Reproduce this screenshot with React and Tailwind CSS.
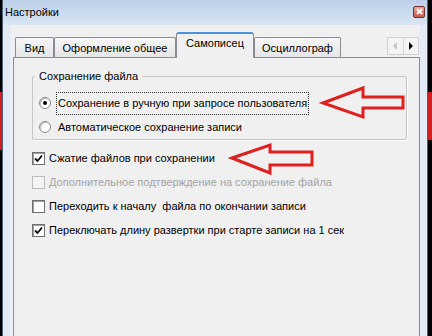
import React from "react";

const font = { fontFamily: '"Liberation Sans", Arial, sans-serif' };

const Check = ({ checked, disabled }) => (
  <span
    className={`w-[13px] h-[13px] shrink-0 flex items-center justify-center border ${
      disabled
        ? "border-[#bcbcbc] bg-[#f4f4f4]"
        : "border-[#707070] bg-white shadow-[inset_1px_1px_0_#a0a0a0]"
    }`}
  >
    {checked && (
      <svg width="9" height="9" viewBox="0 0 9 9">
        <path d="M1 4.5 L3.5 7 L8 1.5" fill="none" stroke="#000" strokeWidth="1.8" />
      </svg>
    )}
  </span>
);

const Radio = ({ checked }) => (
  <span className="w-[12px] h-[12px] shrink-0 rounded-full border border-[#8a8a8a] bg-white shadow-[inset_1px_1px_0_#bdbdbd] flex items-center justify-center">
    {checked && <span className="w-[4px] h-[4px] rounded-full bg-black" />}
  </span>
);

const CheckRow = ({ label, checked, disabled }) => (
  <div className="h-[24px] flex items-center gap-[4px]">
    <Check checked={checked} disabled={disabled} />
    <span className={`whitespace-pre ${disabled ? "text-[#a3a3a3]" : "text-black"}`}>{label}</span>
  </div>
);

const Tab = ({ label, w, active }) =>
  active ? (
    <div
      className={`${w} h-[26px] -mb-px relative z-10 bg-[#f0f0f0] border-x border-[#898c95] border-t-2 border-t-[#4a94dc] rounded-t-[3px] flex items-start justify-center pt-[3px]`}
    >
      {label}
    </div>
  ) : (
    <div
      className={`${w} h-[20px] border-x border-t border-[#898c95] rounded-t-[2px] bg-gradient-to-b from-[#f6f6f6] to-[#e6e6e6] flex items-center justify-center pt-px`}
    >
      {label}
    </div>
  );

export default function App() {
  return (
    <div className="relative w-[432px] h-[336px] bg-black flex overflow-hidden text-[11px] leading-[13px] text-black" style={font}>
      {/* background strip left */}
      <div className="w-[2px] shrink-0 flex flex-col">
        <div className="h-[92px]" />
        <div className="h-[58px] bg-[#d21d1d]" />
      </div>

      {/* window */}
      <div className="w-[426px] shrink-0 flex flex-col border-x border-[#4b5f75]">
        {/* title bar */}
        <div className="h-[25px] shrink-0 bg-gradient-to-b from-[#bcd0e8] to-[#d9e6f4] flex items-center justify-between pl-[2px] pr-[2px]">
          <span className="text-[11px] pb-[1px]">Настройки</span>
          <span className="w-[12px] h-[12px] rounded-[2px] border border-[#6d3232] bg-gradient-to-b from-[#e6a99e] to-[#c45a4c] flex items-center justify-center mb-[2px]">
            <svg width="7" height="7" viewBox="0 0 7 7">
              <path d="M1 1 L6 6 M6 1 L1 6" stroke="#fff" strokeWidth="1.8" />
            </svg>
          </span>
        </div>

        {/* client */}
        <div className="flex-1 flex border-l-[8px] border-r-[7px] border-[#e2ebf6] bg-[#f0f0f0]">
          <div className="flex-1 flex flex-col pl-[2px]">
            {/* tab strip */}
            <div className="h-[32px] shrink-0 flex items-end pl-[2px] relative">
              <Tab label="Вид" w="w-[39px]" />
              <Tab label="Оформление общее" w="w-[122px]" />
              <Tab label="Самописец" w="w-[78px]" active />
              <Tab label="Осциллограф" w="w-[87px]" />
              <div className="ml-auto mr-[1px] mb-[2px] h-[18px] w-[32px] flex border border-[#cfcfcf] bg-[#f4f4f4]">
                <div className="flex-1 flex items-center justify-center border-r border-[#d8d8d8]">
                  <span className="w-0 h-0 border-y-[4px] border-y-transparent border-r-[4px] border-r-[#c4c4c4]" />
                </div>
                <div className="flex-1 flex items-center justify-center">
                  <span className="w-0 h-0 border-y-[4px] border-y-transparent border-l-[4px] border-l-black" />
                </div>
              </div>
            </div>

            {/* tab panel */}
            <div className="flex-1 border border-b-0 border-[#898c95] bg-[#f0f0f0] pl-[18px] pr-[12px]">
              <fieldset className="mt-[11px] border border-[#c6c6c6] shadow-[1px_1px_0_#fff] rounded-[2px] pl-[6px]">
                <legend className="-ml-[4px] px-[4px] leading-[14px]">Сохранение файла</legend>
                <div className="pt-[8px]">
                  <div className="h-[24px] flex items-center gap-[5px]">
                    <Radio checked />
                    <span className="h-[23px] px-[1px] flex items-center border border-dotted border-[#333]">
                      Сохранение в ручную при запросе пользователя
                    </span>
                  </div>
                  <div className="h-[24px] flex items-center gap-[5px]">
                    <Radio />
                    <span className="px-[2px]">Автоматическое сохранение записи</span>
                  </div>
                </div>
              </fieldset>

              <div className="mt-[6px] flex flex-col">
                <CheckRow label="Сжатие файлов при сохранении" checked />
                <CheckRow label="Дополнительное подтверждение на сохранение файла" disabled />
                <CheckRow label="Переходить к началу  файла по окончании записи" />
                <CheckRow label="Переключать длину развертки при старте записи на 1 сек" checked />
              </div>
            </div>
          </div>
        </div>
      </div>

      {/* background strip right */}
      <div className="flex-1 flex flex-col">
        <div className="h-[92px]" />
        <div className="h-[48px] bg-[#d21d1d]" />
      </div>

      {/* red annotation arrows */}
      <svg className="absolute inset-0 pointer-events-none" width="432" height="336">
        <polygon
          points="323,103 363,88 363,97 403,97 403,108 363,108 363,117"
          fill="none"
          stroke="#e0201f"
          strokeWidth="3"
          strokeLinejoin="miter"
        />
        <polygon
          points="232,158 270,145 270,152 312,152 312,165 270,165 270,173"
          fill="none"
          stroke="#e0201f"
          strokeWidth="3"
          strokeLinejoin="miter"
        />
      </svg>
    </div>
  );
}
